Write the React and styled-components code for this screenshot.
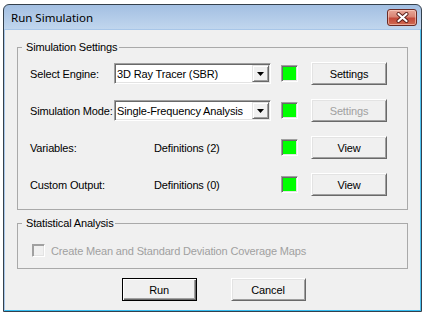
import React from 'react';
import styled, { createGlobalStyle } from 'styled-components';

// ---- global ----
const GlobalStyle = createGlobalStyle`
  html, body { margin: 0; padding: 0; background: #fff; }
  body {
    font-family: "Liberation Sans", Arial, sans-serif;
    font-size: 11px;
    letter-spacing: -0.15px;
    color: #000;
  }
`;

// ---- window frame ----
const Window = styled.div`
  box-sizing: border-box;
  margin: 4px 0 0 3px;
  width: 419px;
  height: 308px;
  border: 1px solid #34404c;
  border-radius: 6px 6px 0 0;
  background: linear-gradient(#a3bfe2 0, #c3d8ef 26px, #c3d8ef 100%);
  display: flex;
  flex-direction: column;
  overflow: hidden;
`;

const TitleBar = styled.div`
  height: 24px;
  flex: none;
  display: flex;
  align-items: center;
  justify-content: space-between;
  padding: 0 4px 0 7px;
`;

const Title = styled.span`
  font-family: "Noto Sans", "Open Sans", sans-serif;
  font-size: 11.5px;
  letter-spacing: 0;
  color: #000;
`;

const CloseButton = styled.div`
  box-sizing: border-box;
  width: 30px;
  height: 17px;
  border: 1px solid #6b2a24;
  border-radius: 3px;
  background: linear-gradient(#e9a899 0%, #d98474 45%, #c4493a 55%, #cf6a52 100%);
  box-shadow: inset 0 0 0 1px rgba(255, 220, 210, 0.55);
  display: flex;
  align-items: center;
  justify-content: center;
`;

const Client = styled.div`
  flex: 1;
  border: 1px solid;
  border-color: #a8c6e8 #4fc2f0 #36bdf0 #a8c6e8;
  background: #f0f0f0;
  padding: 10px 12px 9px 12px;
  display: flex;
  flex-direction: column;
`;

// ---- group boxes ----
const Group = styled.fieldset`
  margin: 0;
  padding: 0;
  border: 1px solid #a9a9a9;
  min-width: 0;
  & + & { margin-top: 6px; }
`;

const Legend = styled.legend`
  margin-left: 4px;
  padding: 0 2px 0 4px;
  line-height: 14px;
  font-size: 11px;
`;

const SettingsGrid = styled.div`
  display: grid;
  grid-template-columns: 84px 167px 30px 76px;
  grid-auto-rows: 23px;
  row-gap: 14px;
  align-items: center;
  padding: 8px 0 13px 12px;
`;

const Label = styled.span`
  white-space: nowrap;
`;

const Value = styled.span`
  padding-left: 40px;
  white-space: nowrap;
`;

// ---- combo box ----
const Combo = styled.div`
  box-sizing: border-box;
  width: 157px;
  height: 21px;
  background: #fff;
  border: 1px solid;
  border-color: #a0a0a0 #fff #fff #a0a0a0;
  box-shadow: inset 1px 1px 0 #696969, inset -1px -1px 0 #e3e3e3;
  display: flex;
  align-items: center;
  justify-content: space-between;
  padding: 1px 1px 1px 2px;
  white-space: nowrap;
`;

const ComboText = styled.span`
  overflow: hidden;
`;

const ArrowButton = styled.div`
  box-sizing: border-box;
  width: 17px;
  height: 17px;
  flex: none;
  background: #f0f0f0;
  border: 1px solid;
  border-color: #e3e3e3 #696969 #696969 #e3e3e3;
  box-shadow: inset 1px 1px 0 #fff, inset -1px -1px 0 #a0a0a0;
  display: flex;
  align-items: center;
  justify-content: center;
`;

// ---- status lamp ----
const Lamp = styled.div`
  box-sizing: border-box;
  width: 17px;
  height: 17px;
  border: 1px solid;
  border-color: #a0a0a0 #fff #fff #a0a0a0;
  box-shadow: inset 1px 1px 0 #696969, inset -1px -1px 0 #e3e3e3;
  background: ${({ $color }) => $color};
`;

// ---- push buttons ----
const Button = styled.button`
  box-sizing: border-box;
  width: ${({ $width }) => $width || 76}px;
  height: 23px;
  padding: 0;
  font-family: "Liberation Sans", Arial, sans-serif;
  font-size: 11px;
  letter-spacing: -0.15px;
  color: ${({ disabled }) => (disabled ? '#a0a0a0' : '#000')};
  background: #f0f0f0;
  border: 1px solid;
  border-color: ${({ $default }) =>
    $default ? '#000' : '#fff #696969 #696969 #fff'};
  box-shadow: ${({ $default }) =>
    $default
      ? 'inset 1px 1px 0 #fff, inset -1px -1px 0 #696969, inset -2px -2px 0 #a0a0a0'
      : 'inset 1px 1px 0 #e3e3e3, inset -1px -1px 0 #a0a0a0'};
`;

const ButtonRow = styled.div`
  display: flex;
  justify-content: center;
  gap: 34px;
  margin-top: 9px;
  padding-left: 2px;
`;

// ---- checkbox ----
const CheckRow = styled.label`
  display: flex;
  align-items: center;
  gap: 6px;
  height: 15px;
  padding: 13px 0 10px 14px;
  color: #a0a0a0;
`;

const CheckBox = styled.span`
  box-sizing: border-box;
  width: 13px;
  height: 13px;
  border: 1px solid;
  border-color: #a0a0a0 #fff #fff #a0a0a0;
  box-shadow: inset 1px 1px 0 #a0a0a0, inset -1px -1px 0 #e3e3e3;
  background: #f0f0f0;
`;

const DownArrow = () => (
  <svg width="7" height="4" viewBox="0 0 7 4">
    <path d="M0 0h7L3.5 4z" fill="#000" />
  </svg>
);

const CloseGlyph = () => (
  <svg width="13" height="11" viewBox="0 0 13 11">
    <path d="M2.5 2 L10.5 9 M10.5 2 L2.5 9" stroke="#5a1f1a" strokeWidth="4" strokeLinecap="round" />
    <path d="M2.5 2 L10.5 9 M10.5 2 L2.5 9" stroke="#fff" strokeWidth="2.2" strokeLinecap="round" />
  </svg>
);

const rows = [
  { label: 'Select Engine:', combo: '3D Ray Tracer (SBR)', action: 'Settings' },
  { label: 'Simulation Mode:', combo: 'Single-Frequency Analysis', action: 'Settings', disabled: true },
  { label: 'Variables:', value: 'Definitions (2)', action: 'View' },
  { label: 'Custom Output:', value: 'Definitions (0)', action: 'View' },
];

export default function App() {
  return (
    <>
      <GlobalStyle />
      <Window>
        <TitleBar>
          <Title>Run Simulation</Title>
          <CloseButton>
            <CloseGlyph />
          </CloseButton>
        </TitleBar>

        <Client>
          <Group>
            <Legend>Simulation Settings</Legend>
            <SettingsGrid>
              {rows.map((r) => (
                <React.Fragment key={r.label}>
                  <Label>{r.label}</Label>
                  {r.combo ? (
                    <Combo>
                      <ComboText>{r.combo}</ComboText>
                      <ArrowButton>
                        <DownArrow />
                      </ArrowButton>
                    </Combo>
                  ) : (
                    <Value>{r.value}</Value>
                  )}
                  <Lamp $color="#00ff00" />
                  <Button disabled={r.disabled}>{r.action}</Button>
                </React.Fragment>
              ))}
            </SettingsGrid>
          </Group>

          <Group>
            <Legend>Statistical Analysis</Legend>
            <CheckRow>
              <CheckBox />
              Create Mean and Standard Deviation Coverage Maps
            </CheckRow>
          </Group>

          <ButtonRow>
            <Button $default $width={75}>Run</Button>
            <Button $width={75}>Cancel</Button>
          </ButtonRow>
        </Client>
      </Window>
    </>
  );
}
